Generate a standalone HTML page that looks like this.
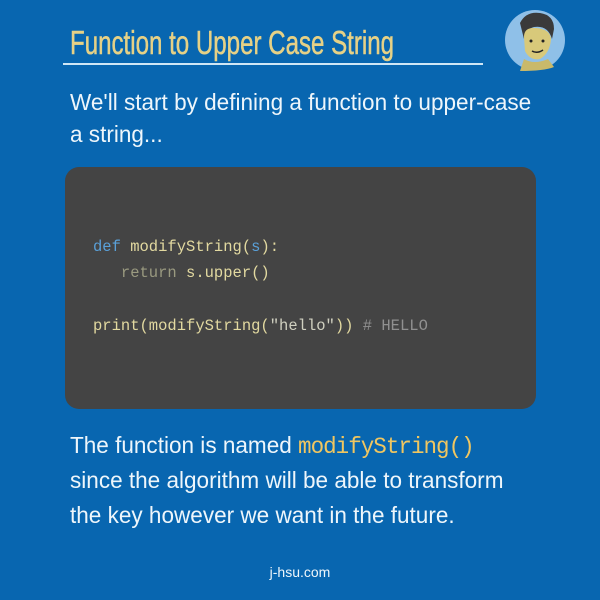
<!DOCTYPE html>
<html><head><meta charset="utf-8"><style>
body{margin:0;width:600px;height:600px;background:#0866b0;position:relative;overflow:hidden;font-family:"Liberation Sans",sans-serif}
.t{position:absolute;white-space:nowrap;color:#eef6fb}
.title{left:70px;top:24px;font-size:33px;color:#e6d186;transform-origin:0 0;transform:scaleX(0.73);-webkit-text-stroke:0.5px #e6d186}
.ul{position:absolute;left:63px;top:63px;width:420px;height:2px;background:#cfe6f5}
.body{font-size:23px;left:70px;transform-origin:0 0;transform:scaleX(0.98)}
.code{position:absolute;left:65px;top:167px;width:471px;height:242px;background:#444444;border-radius:14px}
.c{position:absolute;font-family:"Liberation Mono",monospace;font-size:15.5px;white-space:pre;color:#e2d9a0}
.m{font-family:"Liberation Mono",monospace;color:#f0c660;letter-spacing:-1px}
</style></head><body>
<div class="t title">Function to Upper Case String</div>
<div class="ul"></div>
<svg style="position:absolute;left:504px;top:9px" width="62" height="62" viewBox="0 0 62 62">
<circle cx="31" cy="31" r="30" fill="#8fc0e8"/>
<path d="M16 14 Q22 2 36 4 Q50 6 50 20 L48 30 Q44 16 30 18 Q22 20 20 30 Z" fill="#3a3a3a"/>
<path d="M20 28 Q20 18 32 19 Q46 20 47 30 Q46 44 36 50 Q26 52 21 42 Z" fill="#d8c97a"/>
<path d="M16 62 L20 50 Q30 56 44 50 L50 58 Q40 62 16 62Z" fill="#c9b96a"/>
<circle cx="27" cy="32" r="1.5" fill="#222"/><circle cx="39" cy="32" r="1.5" fill="#222"/>
<path d="M28 42 Q33 45 39 41" stroke="#222" stroke-width="1.5" fill="none"/>
</svg>
<div class="t body" style="top:89px">We'll start by defining a function to upper-case</div>
<div class="t body" style="top:121px">a string...</div>
<div class="code"></div>
<div class="c" style="left:93px;top:238px"><span style="color:#5aa0d8">def</span> modifyString(<span style="color:#5aa0d8">s</span>):</div>
<div class="c" style="left:93px;top:264px"><span style="color:#9a9a80">   return</span> s.upper()</div>
<div class="c" style="left:93px;top:317px">print(modifyString(<span style="color:#d0d0c0">"hello"</span>)) <span style="color:#909090"># HELLO</span></div>
<div class="t body" style="top:432px">The function is named <span class="m">modifyString()</span></div>
<div class="t body" style="top:467px">since the algorithm will be able to transform</div>
<div class="t body" style="top:502px">the key however we want in the future.</div>
<div class="t" style="left:0;width:600px;text-align:center;top:564px;font-size:14px">j-hsu.com</div>
</body></html>
